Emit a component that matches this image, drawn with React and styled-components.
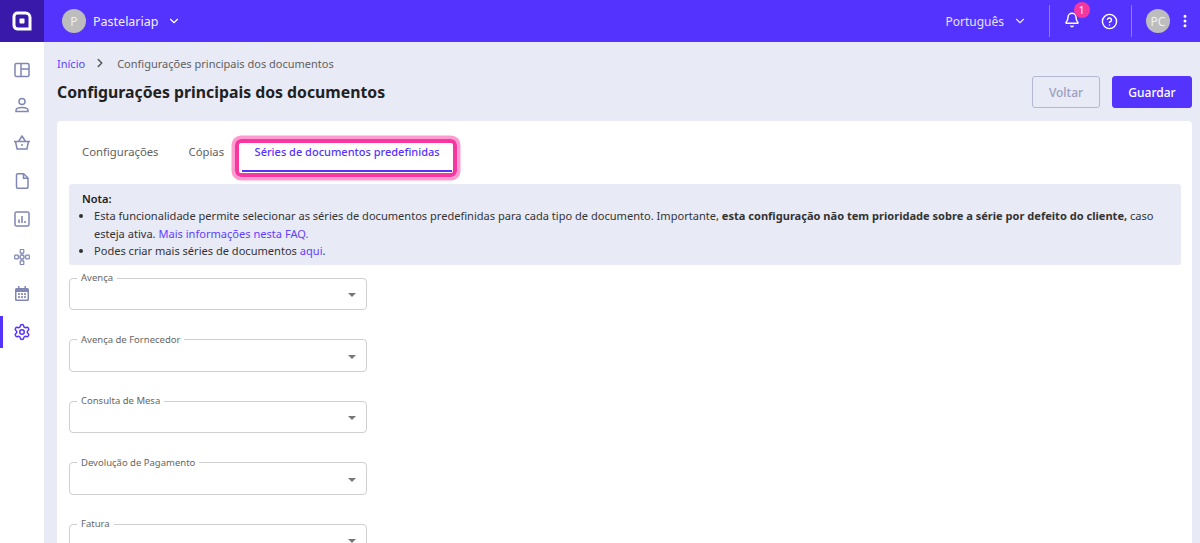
import React from 'react';
import styled, { createGlobalStyle } from 'styled-components';
import { ChevronDown, ChevronRight, Settings, Bell, CircleHelp, EllipsisVertical } from 'lucide-react';

const Global = createGlobalStyle`
  html, body { margin: 0; padding: 0; height: 543px; overflow: hidden; background: #e8eaf6; }
  * { box-sizing: border-box; }
  body { font-family: "Noto Sans", sans-serif; color: #212121; }
`;
const Page = styled.div`display: flex; flex-direction: column; width: 1200px; height: 543px; overflow: hidden;`;
const TopBar = styled.header`display: flex; align-items: center; height: 42px; flex: none; background: #5533ff; color: #fff;`;
const LogoBox = styled.div`width: 44px; height: 42px; background: #3819aa; display: flex; align-items: center; justify-content: center;`;
const Avatar = styled.div`
  width: 24px; height: 24px; border-radius: 50%; background: #bdbdbd; color: #eee; display: flex;
  align-items: center; justify-content: center; font-size: 12px; flex: none;
`;
const Company = styled.div`display: flex; align-items: center; margin-left: 18px; font-size: 12.5px; gap: 8px;`;
const CompanyName = styled.span`margin: 0 1px 0 -1px; color: #f1eeff;`;
const Spacer = styled.div`flex: 1;`;
const Lang = styled.div`display: flex; align-items: center; font-size: 12px; gap: 9px; color: #e6e1ff;`;
const Divider = styled.div`width: 1px; height: 32px; background: rgba(255,255,255,.35); margin: ${p => p.$m};`;
const BellWrap = styled.div`position: relative; width: 16px; height: 18px; display: flex;`;
const Badge = styled.span`
  position: absolute; top: -10px; left: 9.5px; width: 16px; height: 16px; border-radius: 50%; background: #f5379f;
  color: #fff; font-size: 10px; display: flex; align-items: center; justify-content: center;
`;
const HelpIcon = styled(CircleHelp)`margin-left: 21px; flex: none;`;
const MoreIcon = styled(EllipsisVertical)`margin: 0 7px; flex: none;`;
const Body = styled.div`display: flex; flex: 1; min-height: 0;`;
const Sidebar = styled.nav`width: 44px; flex: none; background: #fff; display: flex; flex-direction: column; padding-top: 11.5px;`;
const NavItem = styled.div`
  height: 37.8px; flex: none; display: flex; align-items: center; justify-content: center; position: relative;
  color: ${p => p.$active ? '#5533ff' : '#8087b4'};
  &:first-child { height: 33px; }
  ${p => p.$active && `&::before { content: ""; position: absolute; left: 0; top: 3px; bottom: 3px; width: 3px; background: #5533ff; }`}
`;
const Main = styled.main`flex: 1; min-width: 0; padding: 13px 8px 0 13px; display: flex; flex-direction: column;`;
const Crumbs = styled.div`display: flex; align-items: center; font-size: 11px; height: 16px; color: #616161;`;
const CrumbLink = styled.span`color: #5f3fff;`;
const CrumbSep = styled.span`display: flex; margin: 0 10px 0 8px; color: #555;`;
const Header = styled.div`display: flex; align-items: center; justify-content: space-between; height: 32px; margin-top: 5px;`;
const Title = styled.h1`margin: 0; font-size: 15.8px; font-weight: 700; color: #212121;`;
const Actions = styled.div`display: flex; gap: 12px;`;
const Btn = styled.button`
  height: 32px; width: ${p => p.$w}px; border-radius: 3px; font: 500 12px "Noto Sans", sans-serif; padding: 0;
  border: 1px solid ${p => p.$primary ? '#5533ff' : '#b4b8d4'};
  background: ${p => p.$primary ? '#5533ff' : 'transparent'};
  color: ${p => p.$primary ? '#fff' : '#9a9fbd'};
`;
const Card = styled.section`margin-top: 13px; background: #fff; border-radius: 4px 4px 0 0; flex: 1; padding: 0 11px 0 12px; overflow: hidden;`;
const Tabs = styled.div`display: flex; height: 63px; padding-top: 14px; align-items: flex-start;`;
const Tab = styled.div`font-size: 11.3px; color: #616161; line-height: 34px; margin-left: ${p => p.$ml}px;`;
const ActiveTab = styled.div`
  position: relative; margin-left: 18px; width: 210px; height: 37px; text-align: center;
  font-size: 11px; font-weight: 500; color: #5533ff; line-height: 34px;
  border-bottom: 2px solid #5533ff;
  &::after {
    content: ""; position: absolute; left: -7px; right: -5px; top: 4px; bottom: -7px;
    border: 4px solid #f5379f; border-radius: 6px; box-shadow: 0 0 0 3.5px #ff9bd0; pointer-events: none;
  }
`;
const Note = styled.div`background: #e8eaf6; border-radius: 3px; height: 81px; padding: 6px 13px; font-size: 11.07px; line-height: 17.3px; color: #333;`;
const NoteTitle = styled.div`font-weight: 600; color: #212121;`;
const NoteList = styled.ul`margin: 0; padding: 0 0 0 12px;`;
const NoteLink = styled.span`color: #5f3fff;`;
const Fields = styled.div`display: flex; flex-direction: column; gap: 23.5px; margin-top: 7px;`;
const Field = styled.fieldset`
  position: relative; width: 298px; height: 38px; margin: 0; padding: 0 0 0 7px; flex: none;
  border: 1px solid #cfcfcf; border-radius: 4px;
`;
const Legend = styled.legend`font-size: 9.5px; color: #666; padding: 0 4px; line-height: 12px; height: 12px;`;
const Caret = styled.span`
  position: absolute; right: 10px; top: 9px; width: 0; height: 0;
  border-left: 4.5px solid transparent; border-right: 4.5px solid transparent; border-top: 4.5px solid #777;
`;

const LogoMark = () => (
  <svg width="20" height="20" viewBox="0 0 20 20" fill="none">
    <path d="M5.5 2h8A4.5 4.5 0 0 1 18 6.5V18H5.5A4 4 0 0 1 2 14V5.5A3.5 3.5 0 0 1 5.5 2z" stroke="#fff" strokeWidth="3" />
    <rect x="7.5" y="7.5" width="5" height="5" rx=".8" fill="#fff" />
  </svg>
);
const Report = () => (
  <svg width="18" height="18" viewBox="0 0 18 18" fill="none" stroke="currentColor" strokeWidth="1.5">
    <rect x="2" y="2" width="14" height="14" rx="1.5" />
    <path d="M6 13v-3.5M9 13V6M12 13v-2" strokeWidth="1.6" />
  </svg>
);
const Panels = () => (
  <svg width="18" height="18" viewBox="0 0 18 18" fill="none" stroke="currentColor" strokeWidth="1.5">
    <rect x="2" y="2.5" width="14" height="13" rx="1.5" />
    <path d="M8 2.5v13M8 8h8" />
  </svg>
);
const Person = () => (
  <svg width="18" height="18" viewBox="0 0 18 18" fill="none" stroke="currentColor" strokeWidth="1.5">
    <circle cx="9" cy="5.5" r="3" />
    <path d="M3 15.5v-1c0-2 3-3 6-3s6 1 6 3v1z" />
  </svg>
);
const Basket = () => (
  <svg width="18" height="18" viewBox="0 0 18 18" fill="none" stroke="currentColor" strokeWidth="1.5">
    <path d="M1 7.5h16M2.5 7.5l1.6 7.5h9.8l1.6-7.5M5.5 7.5L9 2l3.5 5.5" strokeLinejoin="round" />
    <circle cx="9" cy="11" r="1" fill="currentColor" stroke="none" />
  </svg>
);
const Doc = () => (
  <svg width="18" height="18" viewBox="0 0 18 18" fill="none" stroke="currentColor" strokeWidth="1.5">
    <path d="M3.5 3a1.2 1.2 0 0 1 1.2-1.2h6L15 6v9a1.2 1.2 0 0 1-1.2 1.2H4.7A1.2 1.2 0 0 1 3.5 15z" strokeLinejoin="round" />
    <path d="M10.5 2v4.2H15" />
  </svg>
);
const Tree = () => (
  <svg width="18" height="18" viewBox="0 0 18 18" fill="none" stroke="currentColor" strokeWidth="1.2">
    <rect x="7.2" y="1.5" width="3.6" height="3.6" rx=".6" />
    <rect x="1.7" y="7.2" width="3.6" height="3.6" rx=".6" />
    <rect x="7.2" y="7.2" width="3.6" height="3.6" rx=".6" />
    <rect x="12.7" y="7.2" width="3.6" height="3.6" rx=".6" />
    <rect x="7.2" y="12.9" width="3.6" height="3.6" rx=".6" />
    <path d="M9 5.1v2.1M9 10.8v2.1M5.3 9h1.9M10.8 9h1.9" />
  </svg>
);
const Calendar = () => (
  <svg width="18" height="18" viewBox="0 0 18 18" fill="currentColor">
    <path d="M5 1h1.5v2h5V1H13v2h1.5A1.5 1.5 0 0 1 16 4.5v10a1.5 1.5 0 0 1-1.5 1.5h-11A1.5 1.5 0 0 1 2 14.5v-10A1.5 1.5 0 0 1 3.5 3H5z" />
    <rect x="3.5" y="7" width="11" height="7.5" rx=".3" fill="#fff" />
    <rect x="5" y="8.2" width="2" height="1.7" /><rect x="8" y="8.2" width="2" height="1.7" /><rect x="11" y="8.2" width="2" height="1.7" />
    <rect x="5" y="11.2" width="2" height="1.7" /><rect x="8" y="11.2" width="2" height="1.7" /><rect x="11" y="11.2" width="2" height="1.7" />
  </svg>
);

const fields = ['Avença', 'Avença de Fornecedor', 'Consulta de Mesa', 'Devolução de Pagamento', 'Fatura'];

export default function App() {
  return (
    <Page>
      <Global />
      <TopBar>
        <LogoBox><LogoMark /></LogoBox>
        <Company>
          <Avatar>P</Avatar>
          <CompanyName>Pastelariap</CompanyName>
          <ChevronDown size={14} />
        </Company>
        <Spacer />
        <Lang>Português <ChevronDown size={14} /></Lang>
        <Divider $m="0 14px 0 22px" />
        <BellWrap>
          <Bell size={16} strokeWidth={2.2} />
          <Badge>1</Badge>
        </BellWrap>
        <HelpIcon size={17} />
        <Divider $m="0 14px 0 13px" />
        <Avatar>PC</Avatar>
        <MoreIcon size={16} strokeWidth={2.5} />
      </TopBar>
      <Body>
        <Sidebar>
          <NavItem><Panels /></NavItem>
          <NavItem><Person /></NavItem>
          <NavItem><Basket /></NavItem>
          <NavItem><Doc /></NavItem>
          <NavItem><Report /></NavItem>
          <NavItem><Tree /></NavItem>
          <NavItem><Calendar /></NavItem>
          <NavItem $active><Settings size={18} /></NavItem>
        </Sidebar>
        <Main>
          <Crumbs>
            <CrumbLink>Início</CrumbLink>
            <CrumbSep><ChevronRight size={14} strokeWidth={2.5} /></CrumbSep>
            Configurações principais dos documentos
          </Crumbs>
          <Header>
            <Title>Configurações principais dos documentos</Title>
            <Actions>
              <Btn $w={68}>Voltar</Btn>
              <Btn $primary $w={80}>Guardar</Btn>
            </Actions>
          </Header>
          <Card>
            <Tabs>
              <Tab $ml={13}>Configurações</Tab>
              <Tab $ml={30}>Cópias</Tab>
              <ActiveTab>Séries de documentos predefinidas</ActiveTab>
            </Tabs>
            <Note>
              <NoteTitle>Nota:</NoteTitle>
              <NoteList>
                <li>Esta funcionalidade permite selecionar as séries de documentos predefinidas para cada tipo de documento. Importante, <b>esta configuração não tem prioridade sobre a série por defeito do cliente,</b> caso esteja ativa. <NoteLink>Mais informações nesta FAQ.</NoteLink></li>
                <li>Podes criar mais séries de documentos <NoteLink>aqui</NoteLink>.</li>
              </NoteList>
            </Note>
            <Fields>
              {fields.map(f => (
                <Field key={f}>
                  <Legend>{f}</Legend>
                  <Caret />
                </Field>
              ))}
            </Fields>
          </Card>
        </Main>
      </Body>
    </Page>
  );
}
